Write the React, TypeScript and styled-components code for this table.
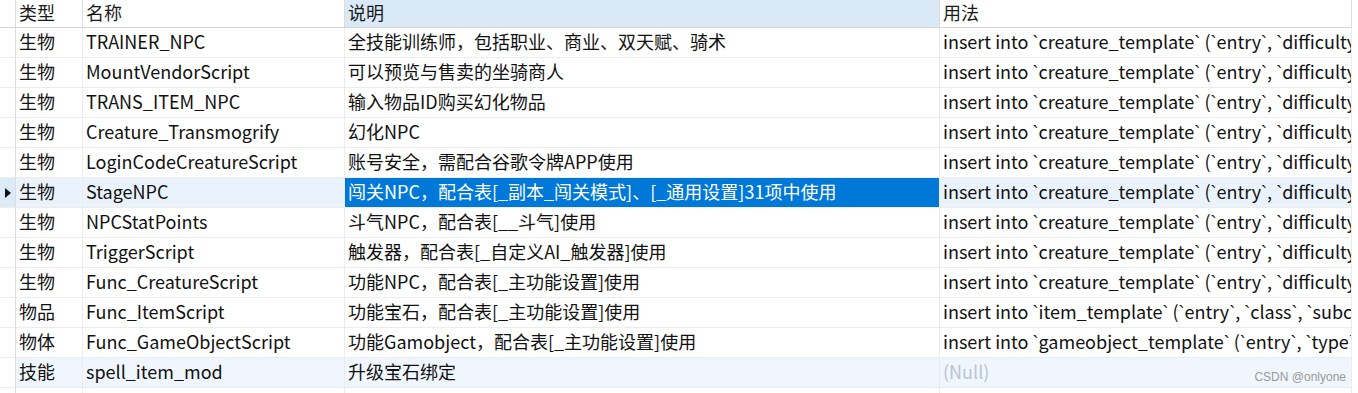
import React from 'react';
import styled, { createGlobalStyle } from 'styled-components';

const GlobalStyle = createGlobalStyle`
  html, body { margin: 0; padding: 0; background: #fff; }
  body { font-family: "Noto Sans CJK SC", "Noto Sans", sans-serif; }
`;

const COLS = '16px 67px 262px 595px 412px';

const Wrap = styled.div`
  position: relative;
  width: 1358px;
  height: 393px;
  overflow: hidden;
  background: #fff;
`;

const Grid = styled.div`
  display: grid;
  grid-template-columns: ${COLS};
  grid-auto-rows: 30px;
  grid-template-rows: 28px;
  width: 1353px;
`;

const HeadCell = styled.div<{ $active?: boolean }>`
  display: flex;
  align-items: center;
  padding: 0 4px 3px 3px;
  font-size: 18px;
  color: #1a1a1a;
  white-space: nowrap;
  overflow: hidden;
  background: ${p => (p.$active ? '#d9e9f7' : '#fff')};
  border-right: 1px solid #dcdcdc;
  border-bottom: 1px solid #d4d4d4;
`;

const Marker = styled.div<{ $bg: string }>`
  display: flex;
  align-items: center;
  justify-content: flex-start;
  padding-left: 5px;
  background: ${p => p.$bg};
  border-right: 1px solid #dcdcdc;
  border-bottom: 1px solid #ececec;
`;

const Arrow = styled.span`
  width: 0;
  height: 0;
  border-top: 5px solid transparent;
  border-bottom: 5px solid transparent;
  border-left: 6px solid #111;
`;

const Cell = styled.div<{ $bg: string; $selected?: boolean; $null?: boolean }>`
  display: flex;
  align-items: center;
  padding: 0 4px 3px 3px;
  font-size: 18px;
  white-space: pre;
  overflow: hidden;
  color: ${p => (p.$selected ? '#fff' : p.$null ? '#b9c3d6' : '#111')};
  background: ${p => (p.$selected ? '#0078d7' : p.$bg)};
  border-right: 1px solid #ececec;
  border-bottom: 1px solid #ececec;
`;

const Tick = styled.span`
  font-family: "Liberation Sans", Arial, sans-serif;
`;

const Watermark = styled.div`
  position: absolute;
  right: 12px;
  bottom: 9px;
  font-family: "Liberation Sans", Arial, sans-serif;
  font-size: 12px;
  color: #9a9a9a;
`;

type Row = { type: string; name: string; desc: string; usage: string | null };

const CT = "insert into `creature_template` (`entry`, `difficulty_entry_1`, `difficulty_entry_2`)";

const rows: Row[] = [
  { type: '生物', name: 'TRAINER_NPC', desc: '全技能训练师，包括职业、商业、双天赋、骑术', usage: CT },
  { type: '生物', name: 'MountVendorScript', desc: '可以预览与售卖的坐骑商人', usage: CT },
  { type: '生物', name: 'TRANS_ITEM_NPC', desc: '输入物品ID购买幻化物品', usage: CT },
  { type: '生物', name: 'Creature_Transmogrify', desc: '幻化NPC', usage: CT },
  { type: '生物', name: 'LoginCodeCreatureScript', desc: '账号安全，需配合谷歌令牌APP使用', usage: CT },
  { type: '生物', name: 'StageNPC', desc: '闯关NPC，配合表[_副本_闯关模式]、[_通用设置]31项中使用', usage: CT },
  { type: '生物', name: 'NPCStatPoints', desc: '斗气NPC，配合表[__斗气]使用', usage: CT },
  { type: '生物', name: 'TriggerScript', desc: '触发器，配合表[_自定义AI_触发器]使用', usage: CT },
  { type: '生物', name: 'Func_CreatureScript', desc: '功能NPC，配合表[_主功能设置]使用', usage: CT },
  { type: '物品', name: 'Func_ItemScript', desc: '功能宝石，配合表[_主功能设置]使用', usage: "insert into `item_template` (`entry`, `class`, `subclass`)" },
  { type: '物体', name: 'Func_GameObjectScript', desc: '功能Gamobject，配合表[_主功能设置]使用', usage: "insert into `gameobject_template` (`entry`, `type`, `displayId`)" },
  { type: '技能', name: 'spell_item_mod', desc: '升级宝石绑定', usage: null },
];

const SELECTED = 5;
const HOVER = 11;

// the CJK font draws the backquote very wide, so give it a Latin face
const Sql = ({ text }: { text: string }) => (
  <span>
    {text.split('`').map((part, i) => (
      <React.Fragment key={i}>
        {i > 0 && <Tick>`</Tick>}
        {part}
      </React.Fragment>
    ))}
  </span>
);

export default function App() {
  return (
    <Wrap>
      <GlobalStyle />
      <Grid>
        <HeadCell />
        <HeadCell>类型</HeadCell>
        <HeadCell>名称</HeadCell>
        <HeadCell $active>说明</HeadCell>
        <HeadCell>用法</HeadCell>
        {rows.map((r, i) => {
          const bg = i === SELECTED ? '#eaf3fc' : i === HOVER ? '#f0f6fd' : '#fff';
          return (
            <React.Fragment key={r.name}>
              <Marker $bg={i === SELECTED ? '#dcebf8' : '#fff'}>{i === SELECTED && <Arrow />}</Marker>
              <Cell $bg={bg}>{r.type}</Cell>
              <Cell $bg={bg}>{r.name}</Cell>
              <Cell $bg={bg} $selected={i === SELECTED}>{r.desc}</Cell>
              <Cell $bg={bg} $null={r.usage === null}>
                {r.usage === null ? '(Null)' : <Sql text={r.usage} />}
              </Cell>
            </React.Fragment>
          );
        })}
        <Marker $bg="#fff" />
        <Cell $bg="#fff" />
        <Cell $bg="#fff" />
        <Cell $bg="#fff" />
        <Cell $bg="#fff" />
      </Grid>
      <Watermark>CSDN @onlyone</Watermark>
    </Wrap>
  );
}
